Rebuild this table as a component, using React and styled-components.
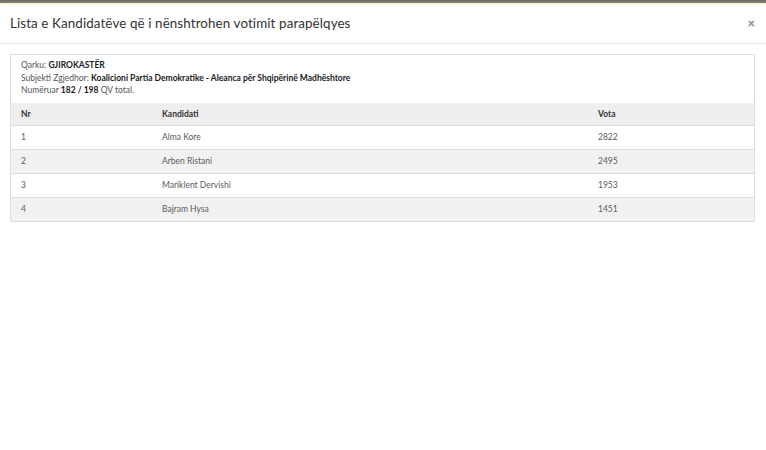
import React from "react";
import styled, { createGlobalStyle } from "styled-components";

const GlobalStyle = createGlobalStyle`
  html, body {
    margin: 0;
    padding: 0;
    background: #fff;
  }
  body {
    font-family: Lato, "Open Sans", sans-serif;
    color: #333;
  }
`;

const TopBar = styled.div`
  height: 3px;
  background: linear-gradient(to bottom, #6b6660, #8a847c);
  box-shadow: 0 1px 3px rgba(220, 190, 140, 0.5);
`;

const Header = styled.div`
  display: flex;
  align-items: center;
  justify-content: space-between;
  height: 40px;
  padding: 0 10px 0 10px;
  border-bottom: 1px solid #e5e5e5;
`;

const Title = styled.h4`
  margin: 0;
  font-size: 13.4px;
  font-weight: 400;
  color: #333;
  letter-spacing: 0.1px;
`;

const Close = styled.span`
  font-size: 13px;
  font-weight: 700;
  color: #888;
  line-height: 1;
  margin-right: 1px;
`;

const Body = styled.div`
  padding: 10px 10px;
`;

const Panel = styled.div`
  border: 1px solid #ddd;
  margin-right: 1px;
`;

const Info = styled.div`
  padding: 4px 10px 6px 10px;
  font-size: 8.5px;
  line-height: 12.5px;
  color: #555;
`;

const Strong = styled.b`
  font-weight: 700;
  color: #222;
`;

const Table = styled.table`
  width: 100%;
  border-collapse: collapse;
  font-size: 8.5px;
`;

const Row = styled.tr`
  background: ${(p) => (p.$shade ? "#f1f1f1" : "#fff")};
  border-top: 1px solid #ddd;
`;

const Th = styled.th`
  text-align: left;
  font-weight: 700;
  color: #333;
  height: 22px;
  padding: 0 10px;
  background: #eeeeee;
  width: ${(p) => p.$w || "auto"};
`;

const Td = styled.td`
  height: 23px;
  padding: 0 10px;
  color: #5a5a5a;
`;

const candidates = [
  { nr: 1, name: "Alma Kore", votes: 2822 },
  { nr: 2, name: "Arben Ristani", votes: 2495 },
  { nr: 3, name: "Mariklent Dervishi", votes: 1953 },
  { nr: 4, name: "Bajram Hysa", votes: 1451 },
];

export default function App() {
  return (
    <>
      <GlobalStyle />
      <TopBar />
      <Header>
        <Title>Lista e Kandidatëve që i nënshtrohen votimit parapëlqyes</Title>
        <Close>×</Close>
      </Header>
      <Body>
        <Panel>
          <Info>
            <div>
              Qarku: <Strong>GJIROKASTËR</Strong>
            </div>
            <div>
              Subjekti Zgjedhor:{" "}
              <Strong>Koalicioni Partia Demokratike - Aleanca për Shqipërinë Madhështore</Strong>
            </div>
            <div>
              Numëruar <Strong>182 / 198</Strong> QV total.
            </div>
          </Info>
          <Table>
            <thead>
              <tr>
                <Th $w="121px">Nr</Th>
                <Th $w="416px">Kandidati</Th>
                <Th>Vota</Th>
              </tr>
            </thead>
            <tbody>
              {candidates.map((c, i) => (
                <Row key={c.nr} $shade={i % 2 === 1}>
                  <Td>{c.nr}</Td>
                  <Td>{c.name}</Td>
                  <Td>{c.votes}</Td>
                </Row>
              ))}
            </tbody>
          </Table>
        </Panel>
      </Body>
    </>
  );
}
